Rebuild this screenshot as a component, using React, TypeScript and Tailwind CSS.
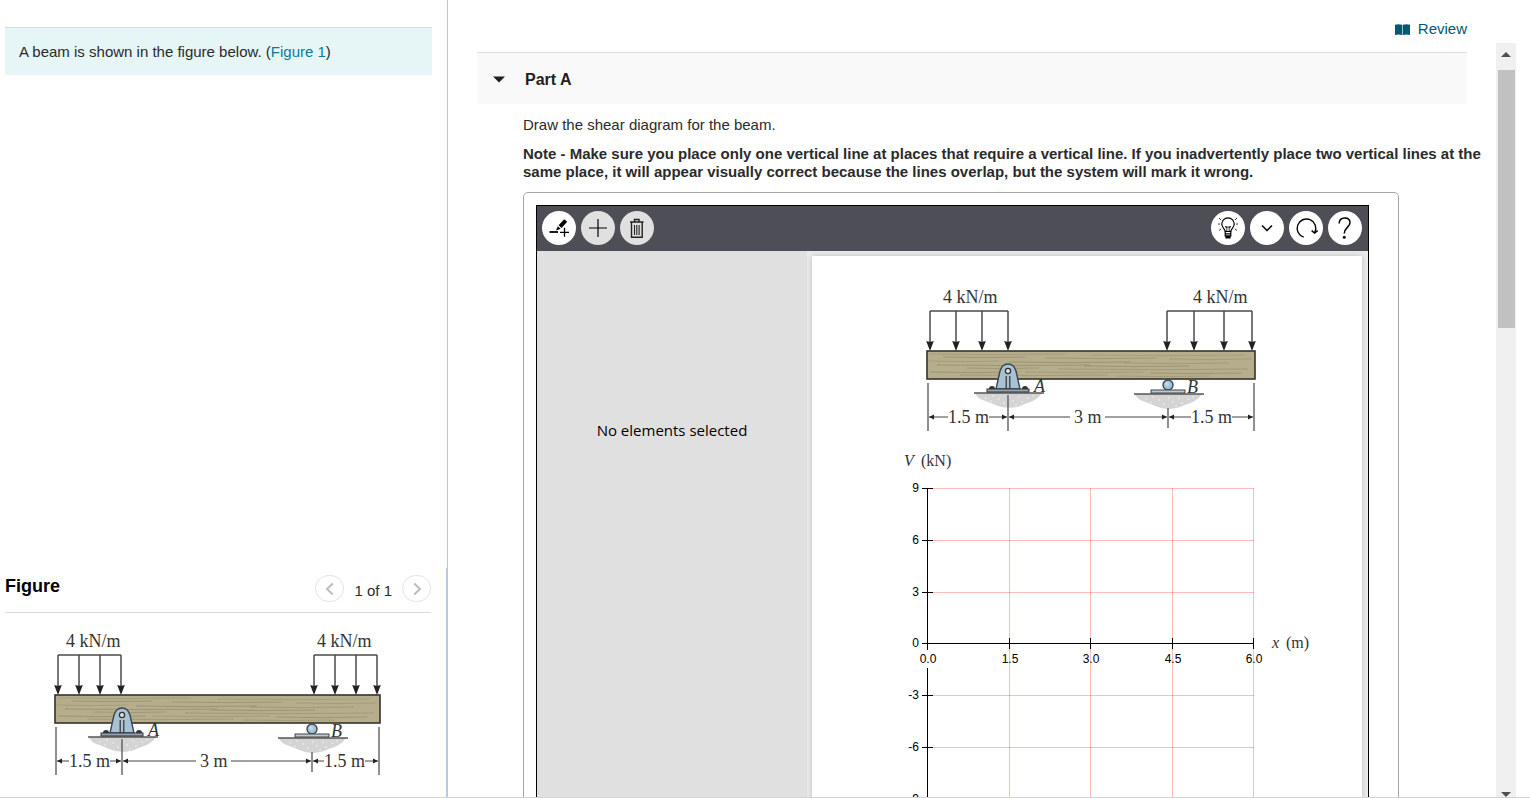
import React, { useState } from 'react';

interface BeamProps {
  length: number;
  leftLoads: number[];
  rightLoads: number[];
  leftLabelX: number;
  rightLabelX: number;
  pinX: number;
  rollerX: number;
  dimTextX: [number, number, number];
  className?: string;
}

const BEAM_X = 10;
const DIM_Y = 132;

// Grain strokes: [start, end, y, opacity], start/end are fractions of the beam length
const GRAIN: [number, number, number, number][] = [
  [0.01, 0.42, 69, 0.35],
  [0.5, 0.97, 70, 0.3],
  [0.05, 0.3, 72, 0.5],
  [0.36, 0.7, 73, 0.45],
  [0.74, 0.99, 74, 0.35],
  [0.0, 0.22, 76, 0.35],
  [0.25, 0.62, 77, 0.55],
  [0.6, 0.92, 78, 0.4],
  [0.03, 0.5, 80, 0.5],
  [0.48, 0.8, 81, 0.55],
  [0.12, 0.34, 83, 0.45],
  [0.4, 0.98, 84, 0.4],
  [0.01, 0.28, 87, 0.5],
  [0.3, 0.66, 87, 0.35],
  [0.68, 0.96, 88, 0.5],
  [0.1, 0.55, 90, 0.4],
  [0.58, 0.86, 91, 0.35],
];

const SPECKS = [
  [-22, 5], [-15, 3], [-17, 8], [-9, 6], [-4, 10], [1, 4], [5, 8], [11, 4], [14, 9], [20, 5], [25, 3], [8, 12],
];

const Arrow = ({ from, to }: { from: number; to: number }) => {
  const d = to > from ? -1 : 1;
  return (
    <g>
      <line x1={from} y1={DIM_Y} x2={to} y2={DIM_Y} stroke="#444" strokeWidth="1" />
      <path d={`M${to} ${DIM_Y} l${d * 5} -2.5 v5 Z`} fill="#222" />
    </g>
  );
};

const Loads = ({ xs }: { xs: number[] }) => (
  <g>
    <path d={`M${xs[0]} 26H${xs[xs.length - 1]}`} stroke="#4a4a4a" strokeWidth="1.4" />
    {xs.map((x) => (
      <g key={x}>
        <line x1={x} y1="26" x2={x} y2="58" stroke="#4a4a4a" strokeWidth="1.5" />
        <path d={`M${x - 3.8} 56 Q${x} 57.5 ${x + 3.8} 56 L${x} 66 Z`} fill="#222" />
      </g>
    ))}
  </g>
);

const Ground = ({ x, y }: { x: number; y: number }) => (
  <g>
    <path
      d={`M${x - 33} ${y} C${x - 30} ${y + 8} ${x - 22} ${y + 7} ${x - 15} ${y + 11} C${x - 8} ${y + 15} ${x + 4} ${y + 16} ${x + 12} ${y + 13} C${x + 20} ${y + 9} ${x + 28} ${y + 9} ${x + 34} ${y} Z`}
      fill="#d4d4d5"
    />
    {SPECKS.map(([dx, dy]) => (
      <circle key={`${dx},${dy}`} cx={x + dx} cy={y + dy} r="0.8" fill="#f4f4f4" />
    ))}
    <line x1={x - 34} y1={y} x2={x + 36} y2={y} stroke="#555" strokeWidth="1.4" />
  </g>
);

const Beam: React.FC<BeamProps> = ({
  length, leftLoads, rightLoads, leftLabelX, rightLabelX, pinX, rollerX, dimTextX, className,
}) => {
  const end = BEAM_X + length;
  const [d1, d2, d3] = dimTextX;
  return (
    <svg
      width="350"
      height="150"
      viewBox="0 0 350 150"
      fill="none"
      className={className}
      fontFamily='"Liberation Serif", "Times New Roman", serif'
      fontSize="18"
      role="img"
      aria-label="Beam with distributed loads on both overhangs"
    >
      <text x={leftLabelX} y="18" fill="#333">4 kN/m</text>
      <text x={rightLabelX} y="18" fill="#333">4 kN/m</text>

      <Ground x={pinX} y={108} />
      <Ground x={rollerX} y={109} />

      <rect x={BEAM_X} y="66" width={length} height="28" fill="#b5ad8b" />
      {GRAIN.map(([a, b, y, o]) => (
        <path
          key={`${a}-${y}`}
          d={`M${BEAM_X + a * length} ${y} Q${BEAM_X + ((a + b) / 2) * length} ${y + 1.2} ${BEAM_X + b * length} ${y}`}
          stroke="#887f5c"
          strokeOpacity={o}
          strokeWidth="1"
        />
      ))}
      <rect x={BEAM_X} y="66" width={length} height="28" stroke="#35332c" strokeWidth="1.6" />
      <Loads xs={leftLoads} />
      <Loads xs={rightLoads} />

      {/* pin support A */}
      <path
        d={`M${pinX - 12} 104 L${pinX - 8} 86 Q${pinX - 6} 79 ${pinX} 79 Q${pinX + 6} 79 ${pinX + 8} 86 L${pinX + 12} 104 Z`}
        fill="#a9c2d3"
        stroke="#3b464e"
        strokeWidth="1.4"
      />
      <circle cx={pinX} cy="86" r="2.6" fill="#dce6ec" stroke="#333" strokeWidth="1.3" />
      <path d={`M${pinX - 1.8} 91V104M${pinX + 1.8} 91V104`} stroke="#333" strokeWidth="1.2" />
      <path d={`M${pinX - 19} 104 a3 3 0 0 1 6 0ZM${pinX + 14} 104 a3 3 0 0 1 6 0Z`} fill="#333" />
      <rect x={pinX - 21} y="104" width="42" height="3" fill="#8ea4b2" stroke="#333" strokeWidth="1" />
      <text x={pinX + 26} y="107" fill="#333" fontStyle="italic">A</text>

      {/* roller support B */}
      <circle cx={rollerX} cy="100" r="5" fill="#a5c3d6" stroke="#3b464e" strokeWidth="1.4" />
      <circle cx={rollerX - 1} cy="99" r="2" fill="#c5d9e4" />
      <rect x={rollerX - 17} y="105" width="34" height="3" fill="#b8cbd6" stroke="#444" strokeWidth="1" />
      <text x={rollerX + 19} y="108" fill="#333" fontStyle="italic">B</text>

      {/* dimensions */}
      <path
        d={`M${BEAM_X + 1} 98V146M${pinX} 110V146M${rollerX} 123V143M${end - 1} 98V146`}
        stroke="#555"
        strokeWidth="1.3"
      />
      <Arrow from={d1} to={BEAM_X + 2} />
      <Arrow from={d1 + 41} to={pinX - 1} />
      <Arrow from={d2 - 4} to={pinX + 1} />
      <Arrow from={d2 + 31} to={rollerX - 1} />
      <Arrow from={d3} to={rollerX + 1} />
      <Arrow from={d3 + 41} to={end - 2} />
      <text x={d1} y="138" fill="#333">1.5 m</text>
      <text x={d2} y="138" fill="#333">3 m</text>
      <text x={d3} y="138" fill="#333">1.5 m</text>
    </svg>
  );
};

const X_TICKS = [
  { x: 32, label: '0.0' },
  { x: 114, label: '1.5' },
  { x: 195, label: '3.0' },
  { x: 277, label: '4.5' },
  { x: 358, label: '6.0' },
];

const Y_TICKS = [
  { y: 38, label: '9' },
  { y: 90, label: '6' },
  { y: 142, label: '3' },
  { y: 193, label: '0' },
  { y: 245, label: '-3' },
  { y: 297, label: '-6' },
  { y: 349, label: '-9' },
];

const ShearChart = () => (
  <svg width="430" height="370" viewBox="0 0 430 370" className="ml-[83px]" role="img" aria-label="Shear diagram grid">
    <g fontFamily='"Liberation Serif", "Times New Roman", serif' fontSize="16" fill="#333">
      <text x="9" y="16" fontStyle="italic">V</text>
      <text x="26" y="16">(kN)</text>
      <text x="377" y="198" fontStyle="italic">x</text>
      <text x="391" y="198">(m)</text>
    </g>
    <g stroke="#ff0000" strokeOpacity="0.27" shapeRendering="crispEdges">
      {X_TICKS.slice(1).map(({ x, label }) => (
        <line key={label} x1={x + 0.5} y1="38" x2={x + 0.5} y2="349" />
      ))}
      {Y_TICKS.map(({ y, label }) => (
        <line key={label} x1="32" y1={y + 0.5} x2="359" y2={y + 0.5} />
      ))}
    </g>
    <g stroke="#000" shapeRendering="crispEdges">
      <path d="M32.5 38V200M32.5 218V349M32 193.5H359" />
      {X_TICKS.map(({ x, label }) => (
        <line key={label} x1={x + 0.5} y1="188" x2={x + 0.5} y2="199" />
      ))}
      {Y_TICKS.map(({ y, label }) => (
        <line key={label} x1="27" y1={y + 0.5} x2="38" y2={y + 0.5} />
      ))}
    </g>
    <g fontFamily='"Liberation Sans", Arial, sans-serif' fontSize="12" fill="#000">
      {X_TICKS.map(({ x, label }) => (
        <text key={label} x={x + 1} y="213" textAnchor="middle">{label}</text>
      ))}
      {Y_TICKS.map(({ y, label }) => (
        <text key={label} x="24" y={y + 4} textAnchor="end">{label}</text>
      ))}
    </g>
  </svg>
);

const toolButton = 'flex items-center justify-center size-[34px] rounded-full text-black';

const Toolbar = () => (
  <div className="flex h-[45px] items-start justify-between bg-[#4e4e57] pt-[5px] pr-1.5 pl-[5px]">
    <div className="flex gap-[5px]">
      <button className={`${toolButton} bg-white`} aria-label="Add line">
        <svg width="24" height="24" viewBox="0 0 24 24" fill="none" stroke="currentColor">
          <path d="M2.5 16H11" strokeWidth="1.8" />
          <path d="M13 16.3H22M17.5 11.8V20.8" strokeWidth="1.3" />
          <path d="M11.6 9.3L17.2 3.2L20.2 5.8L14.6 12Z" fill="currentColor" stroke="none" />
          <path d="M10.8 10.3L13.6 12.8L9 14.4Z" fill="currentColor" stroke="none" />
        </svg>
      </button>
      <button className={`${toolButton} bg-[#e0e0e0]`} aria-label="Add element">
        <svg width="24" height="24" viewBox="0 0 24 24" fill="none" stroke="currentColor" strokeWidth="1.2">
          <path d="M3 12H21M12 3V21" />
        </svg>
      </button>
      <button className={`${toolButton} bg-[#e0e0e0]`} aria-label="Delete">
        <svg width="24" height="24" viewBox="0 0 24 24" fill="none" stroke="#222" strokeWidth="1.4">
          <path d="M5 6H18.5M9.5 5.5V3.5H14V5.5M6.5 6V21.3H17.2V6" />
          <path d="M9.5 9V19M11.8 9V19M14.1 9V19" strokeWidth="1.1" />
        </svg>
      </button>
    </div>
    <div className="flex gap-[5px]">
      <button className={`${toolButton} bg-white`} aria-label="Hint">
        <svg width="24" height="24" viewBox="0 0 24 24" fill="none" stroke="currentColor" strokeWidth="1.2">
          <path d="M9.2 15.5C9.2 13 5.8 12 5.8 8a6.2 6.2 0 0 1 12.4 0C18.2 12 14.8 13 14.8 15.5Z" />
          <path d="M10.8 15V11L9.3 10.5M13.2 15V11L14.7 10.5M9 11H15" strokeWidth="0.8" />
          <path d="M9.2 15.5V20H14.8V15.5M9.2 17.8H14.8" />
          <path d="M10 20H14V22H10Z" fill="currentColor" />
          <path d="M3 2L5 4M21 2L19 4M2 8H4M20 8H22M3 14.5L5.2 12.8M21 14.5L18.8 12.8" strokeWidth="0.8" />
        </svg>
      </button>
      <button className={`${toolButton} bg-white`} aria-label="More">
        <svg width="24" height="24" viewBox="0 0 24 24" fill="none" stroke="currentColor" strokeWidth="1.5">
          <path d="M7 9.5L12 14.5L17 9.5" />
        </svg>
      </button>
      <button className={`${toolButton} bg-white`} aria-label="Reset">
        <svg width="24" height="24" viewBox="0 0 24 24" fill="none" stroke="currentColor" strokeWidth="1.4">
          <path d="M9.8 21.2A9.3 9.3 0 1 1 20.8 16.4" />
          <path d="M17.6 14.6L20.6 17L23.6 14.6" />
        </svg>
      </button>
      <button className={`${toolButton} bg-white`} aria-label="Help">
        <svg width="24" height="24" viewBox="0 0 24 24" fill="none" stroke="currentColor" strokeWidth="1.5">
          <path d="M6.2 7.5C6.2 4 8.5 2 11.7 2C15 2 17 4 17 6.8C17 11 11.3 11.5 11.3 17.5" />
          <circle cx="11.3" cy="21.3" r="1.5" fill="currentColor" stroke="none" />
        </svg>
      </button>
    </div>
  </div>
);

const DrawingTool = () => (
  <div className="mt-[11px] w-full max-w-[876px] rounded-[5px] border border-[#a6a6a6] p-3 pr-[29px]">
    <div className="border border-black">
      <Toolbar />
      <div className="flex h-[640px] bg-[#ebebeb]">
        <aside className="w-[270px] shrink-0 bg-[#e0e0e0] pt-[169px] text-center font-['Open_Sans',sans-serif] text-[15px] leading-5 text-black">
          No elements selected
        </aside>
        <div className="mt-[5px] mr-1.5 ml-[5px] flex-1 overflow-hidden bg-white pt-[29px] shadow-[0_0_6px_rgba(0,0,0,0.2)]">
          <Beam
            length={328}
            leftLoads={[13, 39, 65, 91]}
            rightLoads={[250, 277, 307, 335]}
            leftLabelX={26}
            rightLabelX={276}
            pinX={91}
            rollerX={251}
            dimTextX={[31, 157, 274]}
            className="mb-[15px] ml-[105px]"
          />
          <ShearChart />
        </div>
      </div>
    </div>
  </div>
);

const ProblemPane = () => (
  <div className="flex w-[448px] shrink-0 flex-col border-r border-[#bcc8d4] pt-[27px]">
    <div className="mr-[15px] ml-[5px] border-t border-[#d5dfe0] bg-[#e6f5f6] px-3.5 pt-3.5 pb-[13px] text-[15px] leading-5">
      A beam is shown in the figure below. (
      <a href="#figure-1" className="text-[#0d7a9b]">Figure 1</a>)
    </div>
    <section id="figure-1" className="mt-auto h-[229px] border-r border-[#b9cbde] pt-[7px] pr-[15px] pl-[5px]">
      <div className="flex items-start justify-between border-b border-[#dcdcdc] pb-[10px]">
        <h2 className="text-lg leading-[22px] font-bold text-black">Figure</h2>
        <div className="flex items-center">
          <button className="flex h-[27px] w-[29px] items-center justify-center rounded-full border border-[#e2e2e2]" aria-label="Previous figure">
            <svg width="14" height="14" viewBox="0 0 14 14" fill="none" stroke="#bdbdbd" strokeWidth="2">
              <path d="M9.8 1.5L4 7L9.8 12.5" />
            </svg>
          </button>
          <span className="mt-1 px-[10px] text-[15px] leading-5">1 of 1</span>
          <button className="flex h-[27px] w-[29px] items-center justify-center rounded-full border border-[#e2e2e2]" aria-label="Next figure">
            <svg width="14" height="14" viewBox="0 0 14 14" fill="none" stroke="#bdbdbd" strokeWidth="2">
              <path d="M4.2 1.5L10 7L4.2 12.5" />
            </svg>
          </button>
        </div>
      </div>
      <Beam
        length={325}
        leftLoads={[13, 34, 55, 76]}
        rightLoads={[269, 290, 311, 332]}
        leftLabelX={21}
        rightLabelX={272}
        pinX={77}
        rollerX={267}
        dimTextX={[24, 155, 279]}
        className="mt-4 ml-10"
      />
    </section>
  </div>
);

const ScrollRail = () => (
  <div className="mr-3.5 flex w-5 shrink-0 flex-col items-center bg-[#f0f0f0]">
    <button className="flex h-[27px] w-full items-center justify-center" aria-label="Scroll up">
      <svg width="10" height="5" viewBox="0 0 10 5" className="-mt-1"><path d="M0 5L5 0L10 5Z" fill="#505050" /></svg>
    </button>
    <div className="h-[258px] w-[17px] bg-[#c1c1c1]" />
    <button className="mt-auto flex h-4 w-full items-end justify-center" aria-label="Scroll down">
      <svg width="10" height="5" viewBox="0 0 10 5"><path d="M0 0L5 5L10 0Z" fill="#505050" /></svg>
    </button>
  </div>
);

const App: React.FC = () => {
  const [isOpen, setIsOpen] = useState(true);

  return (
    <div className="flex h-screen overflow-hidden border-b border-[#d3d3d3] bg-white font-['Liberation_Sans',Arial,sans-serif] text-[#2b2b2b]">
      <ProblemPane />
      <main className="flex min-w-0 flex-1 flex-col">
        <div className="flex h-[43px] shrink-0 justify-end pt-[19px] pr-[63px]">
          <a href="#review" className="flex h-5 items-center gap-2 text-[15px] leading-5 text-[#005a70]">
            <svg width="15" height="11" viewBox="0 0 15 11" fill="currentColor">
              <path d="M0 0.8Q3.5 -0.4 7 0.8V11Q3.5 10 0 11Z" />
              <path d="M15 0.8Q11.5 -0.4 8 0.8V11Q11.5 10 15 11Z" />
              <path d="M7 1H8V11H7Z" fillOpacity="0.4" />
            </svg>
            Review
          </a>
        </div>
        <div className="flex min-h-0 flex-1">
          <div className="min-w-0 flex-1 overflow-hidden pt-[9px] pr-[29px] pl-[29px]">
            <button
              onClick={() => setIsOpen((prev) => !prev)}
              aria-expanded={isOpen}
              className="flex h-[52px] w-full items-center border-t border-[#dcdcdc] bg-[#f9f9f9] pt-0.5 pl-4 text-base font-bold text-[#1f1f1f]"
            >
              <svg width="12" height="7" viewBox="0 0 12 7" className="mr-5"><path d="M0 0.5H12L6 6.5Z" fill="#1f1f1f" /></svg>
              Part A
            </button>
            {isOpen && (
              <div className="pt-3 pl-[46px]">
                <p className="text-[15px] leading-[18px]">Draw the shear diagram for the beam.</p>
                <p className="mt-[11px] -mr-5 text-[15px] leading-[18px] font-bold">
                  Note - Make sure you place only one vertical line at places that require a vertical line. If you inadvertently place two vertical lines at the same place, it will appear visually correct because the lines overlap, but the system will mark it wrong.
                </p>
                <DrawingTool />
              </div>
            )}
          </div>
          <ScrollRail />
        </div>
      </main>
    </div>
  );
};

export default App;
